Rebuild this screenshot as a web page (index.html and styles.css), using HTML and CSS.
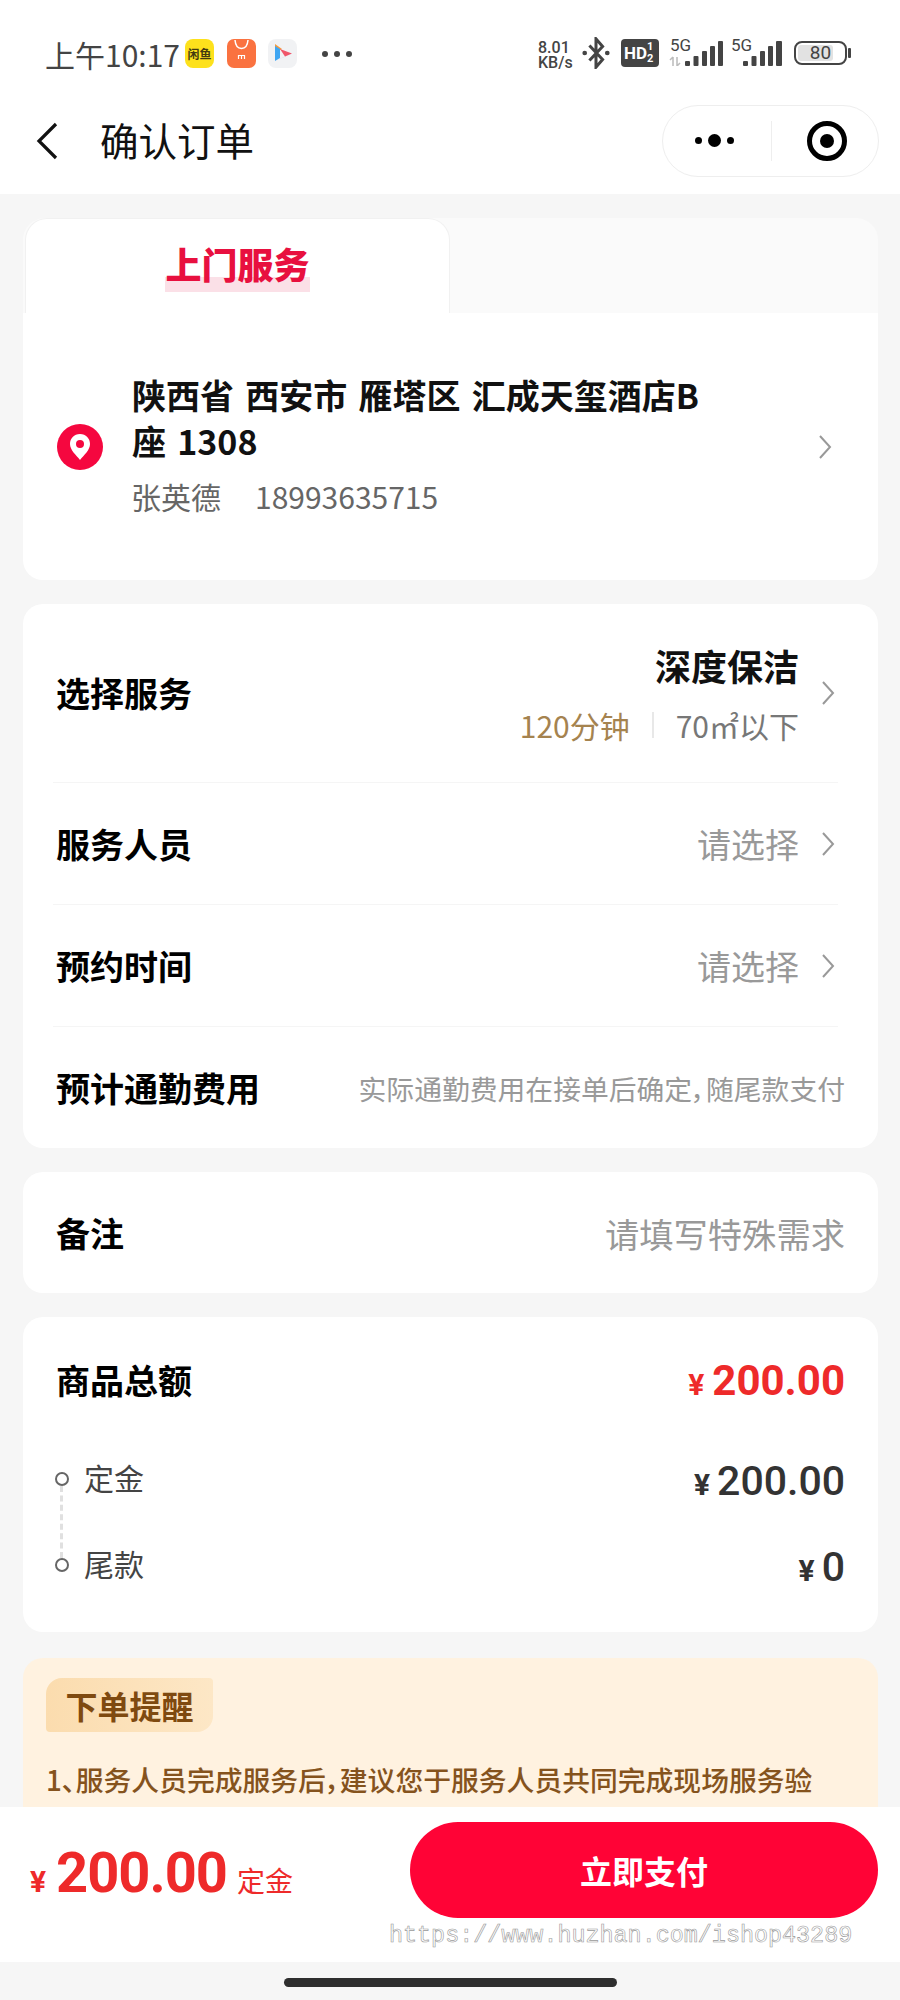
FILE: index.html
```html
<!DOCTYPE html>
<html lang="zh-CN">

<head>
    <meta charset="UTF-8">
    <meta name="viewport" content="width=device-width, initial-scale=1.0">
    <title>确认订单</title>
    <link rel="stylesheet" href="styles.css">
</head>

<body>
    <div class="page">
        <!-- 状态栏 -->
        <div class="status">
            <div class="status-left">
                <span class="time">上午10:17</span>
                <span class="app app-fish">闲鱼</span>
                <svg class="app-svg" width="29" height="29" viewBox="0 0 29 29">
                    <rect width="29" height="29" rx="7" fill="#fa7240" />
                    <path d="M8 1c.5 6 3 8.500 6.500 8.500S20.500 7 21 1" fill="none" stroke="#fff" stroke-width="1.500" />
                    <path d="M11.500 20v-3.500h6V20M14.500 17v3" fill="none" stroke="#fff" stroke-width="1.200" />
                </svg>
                <svg class="app-svg app-play" width="29" height="29" viewBox="0 0 29 29">
                    <rect width="29" height="29" rx="8" fill="#f1f2f4" />
                    <path d="M7 5l7 5-7 4z" fill="#f59a3c" />
                    <path d="M7 7v15l5-3V10z" fill="#3fa6f2" />
                    <path d="M12 10l12 4.500-7 3z" fill="#f0566a" />
                    <path d="M7 22l17-7.500-7 3z" fill="#a06be0" />
                </svg>
                <span class="status-dots"><i></i><i></i><i></i></span>
            </div>
            <div class="status-right">
                <span class="speed">8.01<br>KB/s</span>
                <svg class="bluetooth" width="30" height="32" viewBox="0 0 30 34">
                    <path d="M8 9l14 15-7 8V2l7 8L8 25" fill="none" stroke="#444" stroke-width="3.200" />
                    <circle cx="3" cy="17" r="2.500" fill="#444" />
                    <circle cx="27" cy="17" r="2.500" fill="#444" />
                </svg>
                <span class="hd">HD<span class="hd-num">1<br>2</span></span>
                <span class="signal signal-a">
                    <span class="signal-label">5G</span>
                    <svg width="54" height="25" viewBox="0 0 54 25">
                        <path d="M4 16v9M1 19l3-3M8 25v-9M11 22l-3 3" fill="none" stroke="#bbb" stroke-width="1.500" />
                        <rect x="16" y="20" width="5" height="5" rx="1" fill="#444" />
                        <rect x="24.500" y="15" width="5" height="10" rx="1" fill="#444" />
                        <rect x="33" y="10" width="5" height="15" rx="1" fill="#444" />
                        <rect x="41" y="5" width="5" height="20" rx="1" fill="#444" />
                        <rect x="49" y="0" width="5" height="25" rx="1" fill="#444" />
                    </svg>
                </span>
                <span class="signal signal-b">
                    <span class="signal-label">5G</span>
                    <svg width="53" height="25" viewBox="0 0 53 25">
                        <rect x="13" y="20" width="5" height="5" rx="1" fill="#444" />
                        <rect x="21.500" y="15" width="5" height="10" rx="1" fill="#444" />
                        <rect x="30" y="10" width="5" height="15" rx="1" fill="#444" />
                        <rect x="38" y="5" width="5" height="20" rx="1" fill="#444" />
                        <rect x="46" y="0" width="6" height="25" rx="1" fill="#444" />
                    </svg>
                </span>
                <span class="battery"><span class="battery-fill"></span><b>80</b></span>
                <span class="battery-cap"></span>
            </div>
        </div>

        <!-- 导航栏 -->
        <div class="nav">
            <svg class="back" width="24" height="38" viewBox="0 0 24 38">
                <path d="M21 2L4 19l17 17" fill="none" stroke="#111" stroke-width="3.200" />
            </svg>
            <h1 class="nav-title">确认订单</h1>
            <div class="capsule">
                <span class="capsule-dots"><i></i><i class="big"></i><i></i></span>
                <span class="capsule-line"></span>
                <span class="capsule-target"><i></i></span>
            </div>
        </div>

        <div class="main">
            <div class="tabs">
                <div class="tab-active"><span class="tab-text">上门服务</span></div>
            </div>

            <div class="card card-address">
                <svg class="pin" width="46" height="46" viewBox="0 0 46 46">
                    <circle cx="23" cy="23" r="23" fill="#f5073f" />
                    <path d="M23 10c-6 0-10 4.500-10 10 0 6 6 11 10 16 4-5 10-10 10-16 0-5.500-4-10-10-10z" fill="#fff" />
                    <circle cx="23" cy="20" r="4" fill="#f5073f" />
                </svg>
                <div class="address-body">
                    <div class="address-text">陕西省 西安市 雁塔区 汇成天玺酒店B座 1308</div>
                    <div class="address-user"><span>张英德</span><span>18993635715</span></div>
                </div>
                <svg class="arrow" width="14" height="24" viewBox="0 0 14 24">
                    <path d="M2 1l10 11L2 23" fill="none" stroke="#999" stroke-width="2" />
                </svg>
            </div>

            <div class="card card-service">
                <div class="row row-first">
                    <span class="row-label">选择服务</span>
                    <div class="service-info">
                        <div class="service-name">深度保洁</div>
                        <div class="service-sub"><span class="gold">120分钟</span><i></i><span>70㎡以下</span></div>
                    </div>
                    <svg class="arrow" width="14" height="24" viewBox="0 0 14 24">
                        <path d="M2 1l10 11L2 23" fill="none" stroke="#999" stroke-width="2" />
                    </svg>
                </div>
                <div class="row">
                    <span class="row-label">服务人员</span>
                    <span class="row-hint">请选择</span>
                    <svg class="arrow" width="14" height="24" viewBox="0 0 14 24">
                        <path d="M2 1l10 11L2 23" fill="none" stroke="#999" stroke-width="2" />
                    </svg>
                </div>
                <div class="row">
                    <span class="row-label">预约时间</span>
                    <span class="row-hint">请选择</span>
                    <svg class="arrow" width="14" height="24" viewBox="0 0 14 24">
                        <path d="M2 1l10 11L2 23" fill="none" stroke="#999" stroke-width="2" />
                    </svg>
                </div>
                <div class="row row-last">
                    <span class="row-label">预计通勤费用</span>
                    <span class="row-note">实际通勤费用在接单后确定，随尾款支付</span>
                </div>
            </div>

            <div class="card card-remark">
                <span class="row-label">备注</span>
                <span class="row-hint">请填写特殊需求</span>
            </div>

            <div class="card card-total">
                <div class="total-head">
                    <span class="row-label">商品总额</span>
                    <span class="total-price"><small>¥</small>200.00</span>
                </div>
                <div class="total-line total-line-a">
                    <span class="dot"></span>
                    <span class="total-name">定金</span>
                    <span class="total-num"><small>¥</small>200.00</span>
                </div>
                <div class="total-line">
                    <span class="dot"></span>
                    <span class="total-name">尾款</span>
                    <span class="total-num"><small>¥</small>0</span>
                </div>
            </div>

            <div class="notice">
                <div class="notice-tag">下单提醒</div>
                <p class="notice-text">1、服务人员完成服务后，建议您于服务人员共同完成现场服务验</p>
            </div>
        </div>

        <!-- 底部支付 -->
        <div class="footer">
            <div class="footer-price">
                <small>¥</small><b>200.00</b><span>定金</span>
            </div>
            <div class="pay-btn">立即支付</div>
            <div class="watermark">https://www.huzhan.com/ishop43289</div>
        </div>
        <div class="home-bar"><i></i></div>
    </div>
</body>

</html>
```

FILE: styles.css
```css
* {
    margin: 0;
    padding: 0;
    box-sizing: border-box;
}

body {
    width: 900px;
    height: 2000px;
    overflow: hidden;
    background: #f6f6f6;
    font-family: "Noto Sans CJK SC", "Noto Sans", sans-serif;
    color: #000;
}

i {
    display: block;
    font-style: normal;
}

.page {
    height: 2000px;
    display: flex;
    flex-direction: column;
}

/* 状态栏 */
.status {
    height: 95px;
    flex: none;
    background: #fff;
    padding: 36px 0 0 45px;
    display: flex;
    justify-content: space-between;
    color: #444;
}

.status-left {
    display: flex;
    align-items: flex-start;
}

.time {
    font-size: 30px;
    line-height: 36px;
    width: 140px;
}

.app {
    width: 29px;
    height: 29px;
    margin-top: 3px;
    border-radius: 8px;
    background: #fde11c;
    color: #443a10;
    font-size: 12px;
    font-weight: 700;
    line-height: 29px;
    text-align: center;
    white-space: nowrap;
}

.app-svg {
    margin: 3px 0 0 13px;
}

.app-play {
    margin-left: 12px;
}

.status-dots {
    display: flex;
    gap: 6px;
    margin: 15px 0 0 25px;
}

.status-dots i {
    width: 6px;
    height: 6px;
    border-radius: 50%;
    background: #444;
}

.status-right {
    display: flex;
    align-items: flex-start;
    padding: 0 49px 0 0;
    margin-top: 1px;
}

.speed {
    font-family: "Roboto", sans-serif;
    font-size: 16px;
    font-weight: 500;
    line-height: 15px;
    width: 35px;
    margin-top: 3px;
}

.bluetooth {
    margin-left: 8px;
}

.hd {
    width: 38px;
    height: 28px;
    margin: 2px 0 0 10px;
    border-radius: 4px;
    background: #444;
    color: #fff;
    font-family: "Roboto", sans-serif;
    font-size: 17px;
    font-weight: 700;
    line-height: 28px;
    display: flex;
    padding-left: 3px;
}

.hd-num {
    font-size: 11px;
    line-height: 12px;
    margin: 2px 0 0 0;
}

.signal {
    position: relative;
    display: block;
    height: 29px;
}

.signal-a {
    width: 54px;
    margin-left: 10px;
}

.signal-b {
    width: 53px;
    margin-left: 7px;
}

.signal svg {
    display: block;
    margin-top: 4px;
}

.signal-label {
    position: absolute;
    left: 1px;
    top: 0;
    font-family: "Roboto", sans-serif;
    font-size: 17px;
    line-height: 17px;
}

.battery {
    position: relative;
    width: 53px;
    height: 24px;
    margin: 4px 0 0 11px;
    border: 2px solid #444;
    border-radius: 8px;
    text-align: center;
}

.battery b {
    position: relative;
    font-family: "Roboto", sans-serif;
    font-weight: 400;
    font-size: 19px;
    line-height: 20px;
    display: block;
}

.battery-fill {
    position: absolute;
    left: 2px;
    top: 2px;
    bottom: 2px;
    width: 35px;
    background: #e2e2e2;
    border-radius: 3px;
}

.battery-cap {
    width: 3px;
    height: 10px;
    margin: 11px 0 0 1px;
    background: #444;
    border-radius: 1px;
}

/* 导航栏 */
.nav {
    height: 99px;
    flex: none;
    background: #fff;
    padding: 0 21px 0 35px;
    display: flex;
    align-items: center;
}

.back {
    margin-bottom: 8px;
}

.nav-title {
    font-size: 38.5px;
    font-weight: 400;
    line-height: 50px;
    margin: 0 0 12px 41px;
    color: #111;
}

.capsule {
    margin-left: auto;
    margin-bottom: 8px;
    width: 217px;
    height: 72px;
    border: 1px solid #eeeeee;
    border-radius: 36px;
    display: flex;
    align-items: center;
}

.capsule-dots {
    width: 108px;
    padding-left: 32px;
    display: flex;
    align-items: center;
    gap: 6px;
}

.capsule-dots i {
    width: 7px;
    height: 7px;
    border-radius: 50%;
    background: #000;
}

.capsule-dots i.big {
    width: 13px;
    height: 13px;
}

.capsule-line {
    width: 1px;
    height: 40px;
    background: #eeeeee;
}

.capsule-target {
    width: 40px;
    height: 40px;
    margin-left: 35px;
    border: 5px solid #000;
    border-radius: 50%;
    display: flex;
    align-items: center;
    justify-content: center;
}

.capsule-target i {
    width: 14px;
    height: 14px;
    border-radius: 50%;
    background: #000;
}

/* 内容 */
.main {
    flex: 1;
    min-height: 0;
    overflow: hidden;
    padding: 24px 22px 0 23px;
}

.tabs {
    height: 95px;
    background: #fafafa;
    border-radius: 22px 22px 0 0;
}

.tab-active {
    width: 425px;
    height: 95px;
    margin-left: 2px;
    background: #fff;
    border: 1px solid #f1f1f1;
    border-bottom: none;
    border-radius: 22px 22px 0 0;
    display: flex;
    justify-content: center;
    padding-top: 21px;
}

.tab-text {
    height: 52px;
    font-size: 36px;
    font-weight: 900;
    line-height: 46px;
    color: #e8103f;
    background: linear-gradient(to bottom, transparent 37px, #fbe0e7 37px);
}

.card {
    background: #fff;
    border-radius: 20px;
    margin-bottom: 24px;
}

.card-address {
    height: 267px;
    border-radius: 0 0 20px 20px;
    padding: 0 46px 0 34px;
    display: flex;
    align-items: center;
}

.address-body {
    width: 580px;
    margin: 0 auto 6px 28px;
}

.address-text {
    font-size: 34px;
    font-weight: 700;
    word-spacing: 3.5px;
    line-height: 46px;
    margin-left: 1px;
    color: #111;
}

.address-user {
    margin-top: 12px;
    font-size: 30px;
    line-height: 40px;
    color: #666;
    display: flex;
    gap: 34px;
}

.pin {
    flex: none;
}

.arrow {
    flex: none;
}

.card-service {
    height: 544px;
    padding: 0 40px 0 0;
}

.row {
    height: 122px;
    margin-left: 30px;
    padding-left: 3px;
    border-top: 1px solid #f5f5f5;
    display: flex;
    align-items: center;
}

.row-first {
    height: 178px;
    border-top: none;
}

.row-last {
    height: 122px;
}

.row-label {
    font-size: 34px;
    font-weight: 700;
    line-height: 46px;
}

.row-hint {
    margin-left: auto;
    font-size: 34px;
    line-height: 44px;
    color: #999;
}

.row .arrow {
    margin: 0 3px 0 22px;
}

.row-note {
    margin-left: auto;
    margin-right: -7px;
    font-size: 27.8px;
    font-feature-settings: "palt";
    line-height: 36px;
    color: #999;
    white-space: nowrap;
}

.service-info {
    margin-left: auto;
    text-align: right;
}

.service-name {
    font-size: 36px;
    font-weight: 700;
    line-height: 48px;
    color: #111;
}

.service-sub {
    margin-top: 16px;
    display: flex;
    align-items: center;
    font-size: 30px;
    line-height: 40px;
    color: #777;
}

.gold {
    color: #a5834f;
}

.service-sub i {
    width: 2px;
    height: 26px;
    background: #e8e8e8;
    margin: 0 22px;
}

.card-remark {
    height: 121px;
    padding: 0 33px 0 33px;
    display: flex;
    align-items: center;
    justify-content: space-between;
}

.card-remark .row-hint {
    font-size: 34.3px;
}

.card-total {
    height: 315px;
    padding: 40px 33px 0 33px;
}

.total-head {
    display: flex;
    justify-content: space-between;
    align-items: center;
    height: 46px;
}

.total-price {
    font-family: "Roboto", sans-serif;
    font-size: 42px;
    font-weight: 700;
    color: #ee2a2a;
}

.total-price small {
    font-size: 30px;
    margin-right: 8px;
}

.total-line {
    position: relative;
    display: flex;
    justify-content: space-between;
    align-items: center;
    height: 40px;
    margin-top: 46px;
    padding-left: 28px;
    font-size: 30px;
    color: #444;
}

.total-line-a {
    margin-top: 54px;
}

.total-line-a::after {
    content: "";
    position: absolute;
    left: 4px;
    top: 29px;
    height: 72px;
    border-left: 3px dashed #e0e0e0;
}

.dot {
    position: absolute;
    left: -1px;
    top: 15px;
    width: 14px;
    height: 14px;
    background: #fff;
    border: 2px solid #666;
    border-radius: 50%;
    z-index: 1;
}

.total-name {
    line-height: 40px;
}

.total-num {
    margin-top: 8px;
    font-family: "Roboto", sans-serif;
    font-size: 41px;
    font-weight: 500;
    color: #333;
}

.total-num small {
    font-size: 30px;
    font-weight: 700;
    margin-right: 7px;
}

.notice {
    margin-top: 26px;
    height: 300px;
    background: #fff2e0;
    border-radius: 20px;
    padding: 20px 24px 20px 23px;
}

.notice-tag {
    width: 167px;
    height: 54px;
    border-radius: 16px 4px 16px 4px;
    background: linear-gradient(to right, #fbdcae, #fde7c6);
    color: #7f4a10;
    font-size: 32px;
    font-weight: 700;
    line-height: 54px;
    text-align: center;
}

.notice-text {
    margin-top: 22px;
    font-size: 27.8px;
    font-weight: 500;
    font-feature-settings: "palt";
    line-height: 50px;
    color: #85531d;
    white-space: nowrap;
}

/* 底部 */
.footer {
    position: relative;
    height: 155px;
    flex: none;
    background: #fff;
    padding: 15px 22px 0 30px;
    display: flex;
    justify-content: space-between;
    align-items: flex-start;
}

.footer-price {
    margin-top: 16px;
    display: flex;
    align-items: baseline;
    color: #ee2a2a;
    font-family: "Roboto", sans-serif;
}

.footer-price small {
    font-size: 30px;
    font-weight: 700;
    margin-right: 10px;
}

.footer-price b {
    font-size: 56px;
    letter-spacing: -1px;
    line-height: 70px;
}

.footer-price span {
    margin-left: 10px;
    font-family: "Noto Sans CJK SC", sans-serif;
    font-size: 28px;
}

.pay-btn {
    width: 468px;
    height: 96px;
    border-radius: 48px;
    background: #ff0336;
    color: #fff;
    font-size: 32px;
    font-weight: 700;
    line-height: 96px;
    text-align: center;
}

.watermark {
    position: absolute;
    left: 389px;
    top: 114px;
    font-family: "Liberation Mono", monospace;
    font-size: 23.4px;
    line-height: 30px;
    color: #fff;
    -webkit-text-stroke: 0.6px #999;
    white-space: nowrap;
}

.home-bar {
    height: 38px;
    flex: none;
    background: #f6f6f6;
    padding-top: 16px;
}

.home-bar i {
    width: 333px;
    height: 9px;
    margin-left: 284px;
    border-radius: 5px;
    background: #2e2e2e;
}
```
